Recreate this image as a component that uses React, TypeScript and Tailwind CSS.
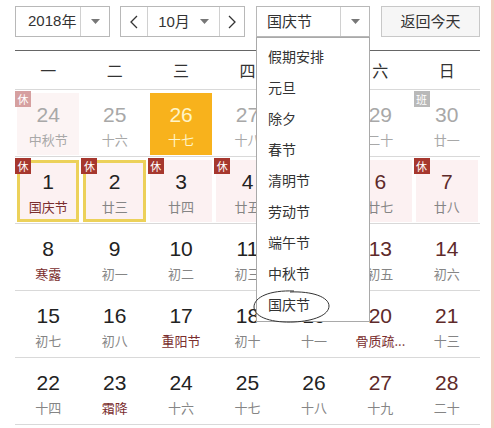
import React from 'react'

type Day = {
  n: number
  lunar: string
  faded?: boolean
  today?: boolean
  badge?: 'rest' | 'work'
  rest?: boolean
  boxed?: boolean
  fest?: boolean
  weekend?: boolean
}

const rows: Day[][] = [
  [
    { n: 24, lunar: '中秋节', faded: true, badge: 'rest', rest: true },
    { n: 25, lunar: '十六', faded: true },
    { n: 26, lunar: '十七', today: true },
    { n: 27, lunar: '十八', faded: true },
    { n: 28, lunar: '十九', faded: true },
    { n: 29, lunar: '二十', faded: true, badge: 'work' },
    { n: 30, lunar: '廿一', faded: true, badge: 'work' },
  ],
  [
    { n: 1, lunar: '国庆节', badge: 'rest', rest: true, boxed: true, fest: true },
    { n: 2, lunar: '廿三', badge: 'rest', rest: true, boxed: true },
    { n: 3, lunar: '廿四', badge: 'rest', rest: true },
    { n: 4, lunar: '廿五', badge: 'rest', rest: true },
    { n: 5, lunar: '廿六', badge: 'rest', rest: true },
    { n: 6, lunar: '廿七', badge: 'rest', rest: true, weekend: true },
    { n: 7, lunar: '廿八', badge: 'rest', rest: true, weekend: true },
  ],
  [
    { n: 8, lunar: '寒露', fest: true },
    { n: 9, lunar: '初一' },
    { n: 10, lunar: '初二' },
    { n: 11, lunar: '初三' },
    { n: 12, lunar: '初四' },
    { n: 13, lunar: '初五', weekend: true },
    { n: 14, lunar: '初六', weekend: true },
  ],
  [
    { n: 15, lunar: '初七' },
    { n: 16, lunar: '初八' },
    { n: 17, lunar: '重阳节', fest: true },
    { n: 18, lunar: '初十' },
    { n: 19, lunar: '十一' },
    { n: 20, lunar: '骨质疏...', weekend: true, fest: true },
    { n: 21, lunar: '十三', weekend: true },
  ],
  [
    { n: 22, lunar: '十四' },
    { n: 23, lunar: '霜降', fest: true },
    { n: 24, lunar: '十六' },
    { n: 25, lunar: '十七' },
    { n: 26, lunar: '十八' },
    { n: 27, lunar: '十九', weekend: true },
    { n: 28, lunar: '二十', weekend: true },
  ],
]

const weekdays = ['一', '二', '三', '四', '五', '六', '日']
const holidays = ['假期安排', '元旦', '除夕', '春节', '清明节', '劳动节', '端午节', '中秋节', '国庆节']

const cjk = { fontFamily: '"Noto Sans CJK SC", "Noto Sans", sans-serif' }
const num = { fontFamily: '"Liberation Sans", Arial, sans-serif' }

function Caret() {
  return (
    <svg width="9" height="5" viewBox="0 0 9 5">
      <path d="M0 0 L9 0 L4.5 5 Z" fill="#777" />
    </svg>
  )
}

function Chevron({ dir }: { dir: 'l' | 'r' }) {
  return (
    <svg width="8" height="14" viewBox="0 0 8 14">
      <polyline
        points={dir === 'l' ? '7,1 1,7 7,13' : '1,1 7,7 1,13'}
        fill="none"
        stroke="#333"
        strokeWidth="1.3"
      />
    </svg>
  )
}

function Cell({ d }: { d: Day }) {
  let bg = 'bg-white'
  if (d.today) bg = 'bg-[#f8b21c]'
  else if (d.rest) bg = d.faded ? 'bg-[#fcf4f4]' : 'bg-[#fcf1f2]'

  let numColor = 'text-[#222]'
  if (d.today) numColor = 'text-[#fff5c8]'
  else if (d.faded) numColor = 'text-[#a8a8a8]'
  else if (d.weekend) numColor = 'text-[#5e2a2a]'

  let lunarColor = 'text-[#858585]'
  if (d.today) lunarColor = 'text-[#fff5c8]'
  else if (d.faded) lunarColor = 'text-[#a8a8a8]'
  else if (d.fest) lunarColor = 'text-[#7a2e2e]'

  return (
    <div className="relative h-[67px] border-b border-[#d9d9d9] px-[2px] pt-[3px]">
      <div
        className={`h-[62px] ${bg} ${d.boxed ? 'border-[3px] border-[#ecd15a]' : ''} flex flex-col items-center`}
      >
        <div
          className={`${numColor} text-[21px] leading-[26px] ${d.boxed ? 'mt-[6px]' : 'mt-[9px]'}`}
          style={num}
        >
          {d.n}
        </div>
        <div className={`${lunarColor} text-[13px] leading-[20px] mt-[2px] whitespace-nowrap`} style={cjk}>
          {d.lunar}
        </div>
      </div>
      {d.badge && (
        <div
          className={`absolute left-0 top-[1px] w-[16px] h-[16px] flex items-center justify-center text-[11px] leading-none text-white ${
            d.badge === 'work' ? 'bg-[#b9b9b9]' : d.faded ? 'bg-[#d6a0a0]' : 'bg-[#a6372e]'
          }`}
          style={cjk}
        >
          {d.badge === 'work' ? '班' : '休'}
        </div>
      )}
    </div>
  )
}

export default function App() {
  return (
    <div className="relative w-[494px] h-[428px] bg-white overflow-hidden border-r-[3px] border-[#f2cfc0]" style={cjk}>
      <div className="pl-[15px] w-[480px]">
        {/* Controls */}
        <div className="flex items-center h-[31px] mt-[6px] text-[15px] text-[#333]">
          <div className="flex w-[95px] h-full border border-[#b8b8b8] bg-white">
            <div className="flex-1 flex items-center pl-[12px] border-r border-[#d0d0d0]">
              <span style={num}>2018</span>年
            </div>
            <div className="w-[28px] flex items-center justify-center">
              <Caret />
            </div>
          </div>
          <div className="flex w-[125px] h-full ml-[10px] border border-[#b8b8b8] bg-white">
            <div className="w-[27px] flex items-center justify-center border-r border-[#d0d0d0]">
              <Chevron dir="l" />
            </div>
            <div className="w-[72px] flex items-center justify-center gap-[10px] border-r border-[#d0d0d0]">
              <span>
                <span style={num}>10</span>月
              </span>
              <Caret />
            </div>
            <div className="flex-1 flex items-center justify-center">
              <Chevron dir="r" />
            </div>
          </div>
          <div className="flex w-[114px] h-full ml-[11px] border border-[#b8b8b8] bg-white">
            <div className="w-[84px] flex items-center pl-[10px] border-r border-[#d0d0d0]">国庆节</div>
            <div className="flex-1 flex items-center justify-center">
              <Caret />
            </div>
          </div>
          <button className="w-[99px] h-full ml-[11px] border border-[#c8c8c8] bg-[#f6f6f6] text-[15px] text-[#333]">
            返回今天
          </button>
        </div>

        <div className="mt-[13px] border-b border-[#666]" />

        {/* Weekdays */}
        <div className="grid grid-cols-7 h-[39px] border-b border-[#d9d9d9] text-[16px] text-[#333]">
          {weekdays.map((w) => (
            <div key={w} className="flex items-center justify-center">
              {w}
            </div>
          ))}
        </div>

        {/* Days */}
        <div className="grid grid-cols-7">
          {rows.flat().map((d, i) => (
            <Cell key={i} d={d} />
          ))}
        </div>
      </div>

      {/* Holiday dropdown */}
      <div className="absolute left-[256px] top-[37px] w-[114px] h-[285px] bg-white border border-[#a9a9a9] pt-[3px] text-[14px] text-[#333]">
        {holidays.map((h) => (
          <div key={h} className="h-[31px] flex items-center pl-[11px]">
            {h}
          </div>
        ))}
      </div>

      {/* hand-drawn circle annotation */}
      <svg className="absolute left-[250px] top-[288px]" width="84" height="38" viewBox="0 0 84 38">
        <path
          d="M44 3 C20 2 4 9 4 19 C4 30 24 35 44 34 C64 33 79 27 79 18 C79 9 62 3 40 4"
          fill="none"
          stroke="#333"
          strokeWidth="1"
        />
      </svg>
    </div>
  )
}
